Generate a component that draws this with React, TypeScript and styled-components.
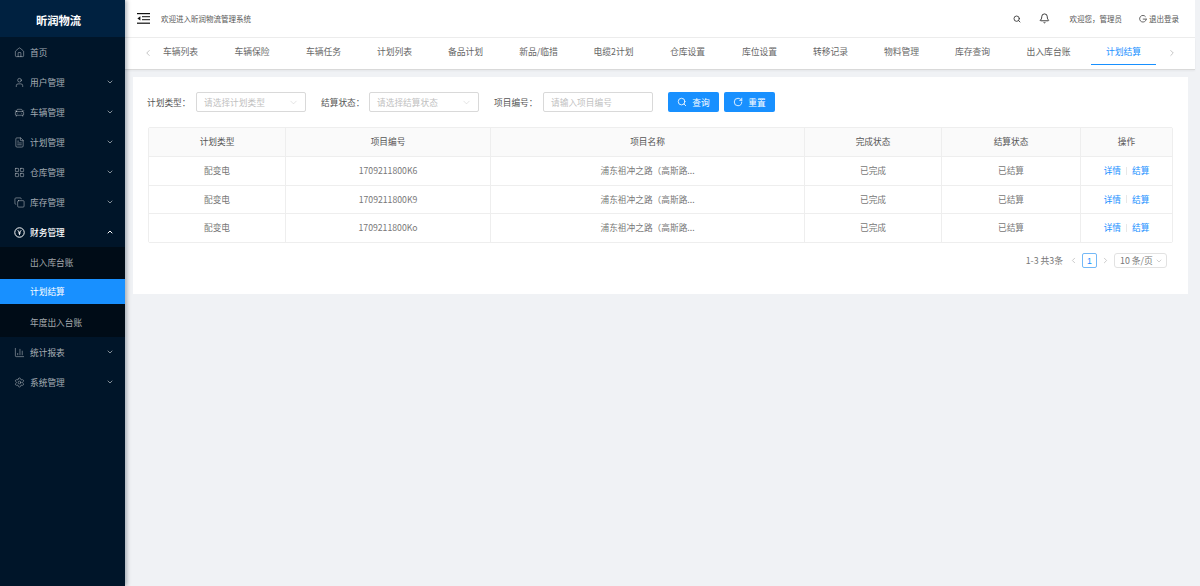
import React from "react";
import styled, { createGlobalStyle } from "styled-components";
import { Home, User, CarFront, FileText, LayoutGrid, Copy, ChartColumn, Settings, ChevronDown, ChevronUp, ChevronLeft, ChevronRight, Search, Bell, RotateCw } from "lucide-react";

const Global = createGlobalStyle`
  html, body { margin: 0; padding: 0; height: 586px; overflow: hidden; background: #f0f2f5; }
  body { font-family: "Noto Sans CJK SC", "Noto Sans", sans-serif; font-size: 9px; color: #666; }
  #root { height: 586px; }
  * { box-sizing: border-box; }
`;
const Layout = styled.div`display: flex; height: 586px; width: 1200px;`;
const Sider = styled.aside`width: 125px; flex: none; background: #001529; box-shadow: 2px 0 4px rgba(0,21,41,.3); display: flex; flex-direction: column; z-index: 2;`;
const Logo = styled.div`height: 37px; background: #002140; color: #fff; font-size: 11.3px; font-weight: 700; display: flex; align-items: center; justify-content: center; padding: 2px 8px 0 0;`;
const MenuRow = styled.div<{ $open?: boolean }>`height: 30px; display: flex; align-items: center; padding: 0 11px 0 14px; gap: 5px; color: ${p => p.$open ? "#fff" : "rgba(255,255,255,.65)"}; font-size: 8.7px; font-weight: ${p => p.$open ? 500 : 400}; svg { flex: none; }`;
const MenuLabel = styled.span`flex: 1;`;
const SubMenu = styled.div`background: #000c17; display: flex; flex-direction: column;`;
const SubRow = styled.div<{ $active?: boolean }>`padding: 0 0 0 30px; margin: ${p => p.$active ? "2px 0 3px" : "0"}; height: ${p => p.$active ? "25px" : "30px"}; display: flex; align-items: center; font-size: 8.7px; background: ${p => p.$active ? "#1890ff" : "transparent"}; color: ${p => p.$active ? "#fff" : "rgba(255,255,255,.65)"};`;
const Right = styled.div`width: 1070px; flex: none; display: flex; flex-direction: column;`;
const TopBar = styled.header`height: 38px; background: #fff; border-bottom: 1px solid #ececec; display: flex; align-items: center; padding: 0 16px 0 12px; color: #555; font-size: 7.5px;`;
const Welcome = styled.span`margin-left: 11px; flex: 1; color: #555;`;
const TopItem = styled.span<{ $gap: number }>`display: inline-flex; align-items: center; gap: 2px; margin-left: ${p => p.$gap}px; color: #555;`;
const Tabs = styled.nav`height: 32px; background: #fff; border-bottom: 1px solid #d9d9d9; box-shadow: 0 1px 2px rgba(0,0,0,.05); display: flex; align-items: stretch; padding: 0 0 0 20px; position: relative; color: #666;`;
const TabArrow = styled.span<{ $right?: boolean }>`position: absolute; top: 10px; ${p => p.$right ? "right: 18px;" : "left: 18px;"} color: #bbb; display: flex;`;
const Tab = styled.div<{ $active?: boolean; $w: number }>`width: ${p => p.$w}px; margin-left: ${p => p.$active ? 2 : 0}px; text-align: center; font-size: 8.8px; line-height: 27px; height: 27px; flex: none; white-space: nowrap; color: ${p => p.$active ? "#1890ff" : "#666"}; border-bottom: ${p => p.$active ? "1px solid #1890ff" : "none"};`;
const Card = styled.main`margin: 7px 7px 0 8px; background: #fff; height: 217px; padding: 15px 15px 0 15px;`;
const Filters = styled.div`display: flex; align-items: center; height: 20px; margin-left: -1px; color: #555; font-size: 8.7px;`;
const FLabel = styled.span<{ $w: number }>`width: ${p => p.$w}px; flex: none; white-space: nowrap;`;
const Field = styled.div`width: 110px; height: 20px; flex: none; margin-right: 15px; border: 1px solid #d9d9d9; border-radius: 2px; padding: 0 6px 0 7px; display: flex; align-items: center; justify-content: space-between; color: #bfbfbf; font-size: 8.7px; svg { color: #c4c4c4; }`;
const Btn = styled.button`width: 51px; height: 20px; border: none; border-radius: 2px; background: #1890ff; color: #fff; padding: 0; font: inherit; font-size: 8.7px; display: inline-flex; align-items: center; justify-content: center; gap: 5px; margin-right: 5px;`;
const TableWrap = styled.div`margin-top: 15px; border: 1px solid #eee; border-radius: 2px; width: 1025px;`;
const Row = styled.div<{ $head?: boolean; $h: number }>`display: grid; grid-template-columns: 137px 205px 314px 137px 139px 1fr; height: ${p => p.$h}px; background: ${p => p.$head ? "#fafafa" : "#fff"}; color: ${p => p.$head ? "#555" : "#777"}; &:not(:last-child) { border-bottom: 1px solid #eee; }`;
const Cell = styled.div`display: flex; align-items: center; justify-content: center; font-size: 8.7px; padding-bottom: 0.5px; &:not(:last-child) { border-right: 1px solid #eee; }`;
const Link = styled.a`color: #1890ff;`;
const Sep = styled.i`width: 1px; height: 8px; background: #e8e8e8; margin: 0 5px;`;
const Pager = styled.div`display: flex; justify-content: flex-end; align-items: center; margin-top: 10px; padding-right: 6px; height: 15px; color: #777; font-size: 8.8px;`;
const PageBtn = styled.span`width: 15px; height: 15px; border: 1px solid #74b9f7; border-radius: 2px; color: #1890ff; display: flex; align-items: center; justify-content: center; margin: 0 3px; font-family: "Liberation Sans", sans-serif;`;
const PageArrow = styled.span<{ $ml?: number }>`color: #bbb; display: flex; margin: 0 1px 0 ${p => p.$ml ?? 1}px;`;
const SizeSel = styled.span`width: 53px; height: 15px; border: 1px solid #e2e2e2; border-radius: 3px; display: flex; align-items: center; justify-content: space-between; padding: 0 3px 0 5px; margin-left: 3px; svg { color: #bbb; }`;

const MenuFold = () => (
  <svg width="13" height="11" viewBox="0 0 13 11" fill="#111">
    <rect x="0" y="0" width="13" height="1.2" />
    <rect x="5" y="3.2" width="8" height="1" />
    <rect x="5" y="6.2" width="8" height="1" />
    <rect x="0" y="9.6" width="13" height="1.2" />
    <path d="M3.4 3.2v4.4L0.4 5.4z" />
  </svg>
);
const YenCircle = () => (
  <svg width="11" height="11" viewBox="0 0 10 10" fill="none" stroke="#fff">
    <circle cx="5" cy="5" r="4.3" strokeWidth=".9" />
    <path d="M3.4 2.9 5 5l1.6-2.1M5 5v2.4M3.7 5.4h2.6" strokeWidth=".8" />
  </svg>
);
const Logout = () => (
  <svg width="8" height="8" viewBox="0 0 8 8" fill="none" stroke="#555" strokeWidth=".9">
    <path d="M6.6 1.8A3.3 3.3 0 1 0 7.2 4.2" />
    <path d="M3.8 4.1H8" />
  </svg>
);

const menu1 = [
  { i: Home, t: "首页", n: true }, { i: User, t: "用户管理" }, { i: CarFront, t: "车辆管理" },
  { i: FileText, t: "计划管理" }, { i: LayoutGrid, t: "仓库管理" }, { i: Copy, t: "库存管理" },
];
const tabs: [string, number][] = [["车辆列表",71],["车辆保险",72],["车辆任务",71],["计划列表",71],["备品计划",71],["新品/临措",75],["电缆2计划",75],["仓库设置",73],["库位设置",71],["转移记录",71],["物料管理",71],["库存查询",71],["出入库台账",81],["计划结算",65]];
const rows: [string, number][] = [["1709211800K6",29],["1709211800K9",28],["1709211800Ko",28]];

export default function App() {
  return (
    <Layout>
      <Global />
      <Sider>
        <Logo>昕润物流</Logo>
        {menu1.map(m => (
          <MenuRow key={m.t}><m.i size={11} strokeWidth={1.3} /><MenuLabel>{m.t}</MenuLabel>{!m.n && <ChevronDown size={8} strokeWidth={2.4} />}</MenuRow>
        ))}
        <MenuRow $open><YenCircle /><MenuLabel>财务管理</MenuLabel><ChevronUp size={8} strokeWidth={3} /></MenuRow>
        <SubMenu>
          <SubRow>出入库台账</SubRow>
          <SubRow $active>计划结算</SubRow>
          <SubRow>年度出入台账</SubRow>
        </SubMenu>
        <MenuRow><ChartColumn size={11} strokeWidth={1.3} /><MenuLabel>统计报表</MenuLabel><ChevronDown size={8} strokeWidth={2.4} /></MenuRow>
        <MenuRow><Settings size={11} strokeWidth={1.2} /><MenuLabel>系统管理</MenuLabel><ChevronDown size={8} strokeWidth={2.4} /></MenuRow>
      </Sider>
      <Right>
        <TopBar>
          <MenuFold />
          <Welcome>欢迎进入昕润物流管理系统</Welcome>
          <Search size={8} color="#333" strokeWidth={2.6} />
          <TopItem $gap={18}><Bell size={11} color="#222" strokeWidth={1.9} /></TopItem>
          <TopItem $gap={20}>欢迎您，管理员</TopItem>
          <TopItem $gap={17}><Logout />退出登录</TopItem>
        </TopBar>
        <Tabs>
          <TabArrow><ChevronLeft size={10} /></TabArrow>
          {tabs.map(([t, w], i) => <Tab key={t} $w={w} $active={i === tabs.length - 1}>{t}</Tab>)}
          <TabArrow $right><ChevronRight size={10} /></TabArrow>
        </Tabs>
        <Card>
          <Filters>
            <FLabel $w={49}>计划类型：</FLabel>
            <Field>请选择计划类型<ChevronDown size={11} strokeWidth={1} /></Field>
            <FLabel $w={48}>结算状态：</FLabel>
            <Field>请选择结算状态<ChevronDown size={11} strokeWidth={1} /></Field>
            <FLabel $w={49}>项目编号：</FLabel>
            <Field>请输入项目编号</Field>
            <Btn><Search size={10} />查询</Btn>
            <Btn><RotateCw size={10} />重置</Btn>
          </Filters>
          <TableWrap>
            <Row $head $h={29}>{["计划类型","项目编号","项目名称","完成状态","结算状态","操作"].map(h => <Cell key={h}>{h}</Cell>)}</Row>
            {rows.map(([r, h]) => (
              <Row key={r} $h={h}>
                <Cell>配变电</Cell><Cell>{r}</Cell><Cell>浦东祖冲之路（高斯路...</Cell><Cell>已完成</Cell><Cell>已结算</Cell>
                <Cell><Link>详情</Link><Sep /><Link>结算</Link></Cell>
              </Row>
            ))}
          </TableWrap>
          <Pager>
            <span>1-3 共3条</span>
            <PageArrow $ml={6}><ChevronLeft size={9} /></PageArrow>
            <PageBtn>1</PageBtn>
            <PageArrow><ChevronRight size={9} /></PageArrow>
            <SizeSel>10 条/页<ChevronDown size={8} /></SizeSel>
          </Pager>
        </Card>
      </Right>
    </Layout>
  );
}
